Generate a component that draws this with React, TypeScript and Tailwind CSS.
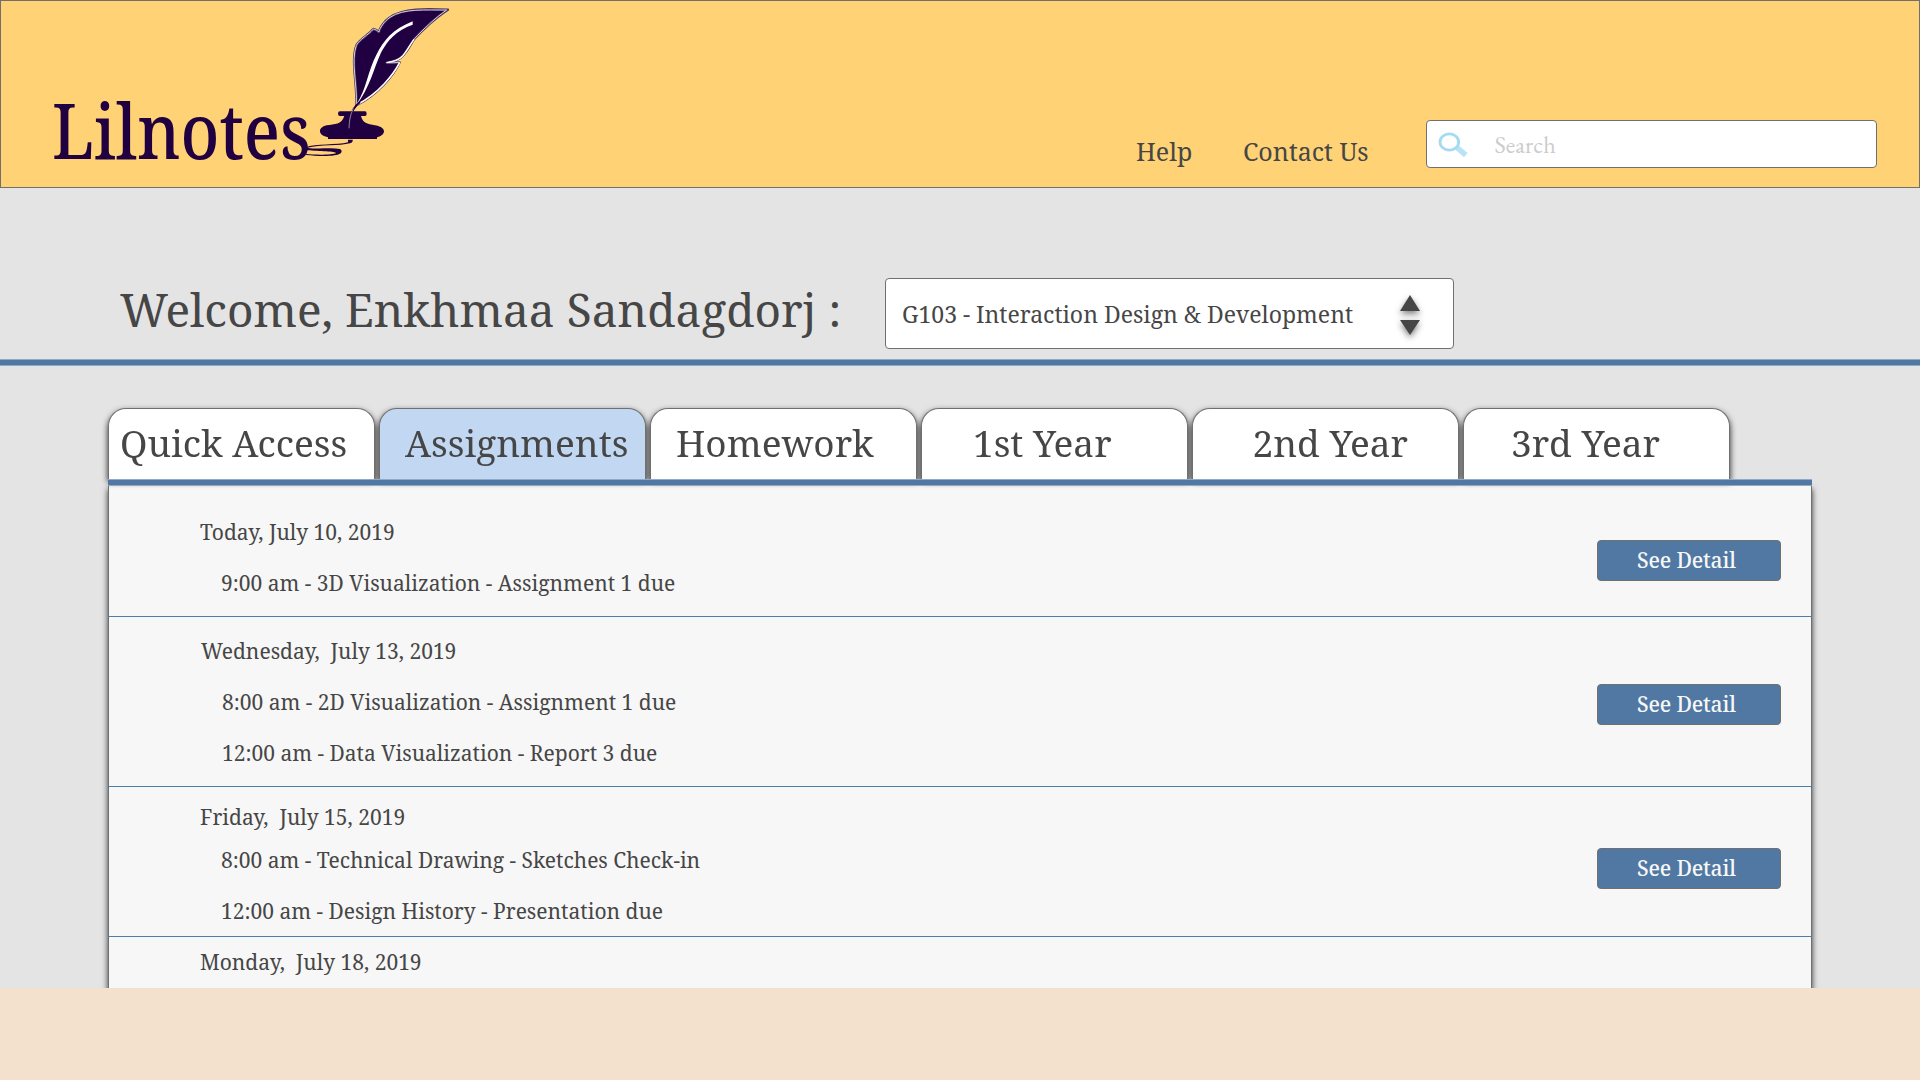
import { clsx } from 'clsx';

const serif = "font-['Noto_Serif','DejaVu_Serif',serif]";

function Quill() {
  return (
    <svg className="absolute left-[279px] -top-px h-[170px] w-[190px]" viewBox="0 0 570 510" fill="none">
      <path
        d="M229 316 C232 250 212 185 229 136 C238 118 265 105 280 87 C286 88 292 92 297 96 C298 86 312 64 330 52 C370 24 440 26 504 29 C470 50 425 92 402 118 C390 134 378 168 352 179 C342 184 330 186 320 188 C334 189 346 188 359 187 C342 224 296 282 229 316 Z"
        fill="#210041"
        stroke="#4d3763"
        strokeWidth="7"
        strokeLinejoin="round"
      />
      <path
        d="M229 316 C232 250 212 185 229 136 C238 118 265 105 280 87 C286 88 292 92 297 96 C298 86 312 64 330 52 C370 24 440 31 500 30 C470 50 425 92 402 118 C390 134 378 168 352 179 C342 184 330 186 320 188 C334 189 346 188 359 187 C342 224 296 282 229 316 Z"
        stroke="#d6cedd"
        strokeWidth="3"
      />
      <path d="M320 188 C342 185 356 180 368 168 C380 153 390 134 402 118" stroke="#fff" strokeWidth="4" />
      <path d="M359 188 C340 224 296 280 231 314" stroke="#fff" strokeWidth="4.5" />
      <path
        d="M229 314 C262 262 262 216 290 163 C310 122 338 88 398 64 L398 74 C350 90 322 122 304 156 C280 208 270 262 229 316 Z"
        fill="#fff"
      />
      <path
        d="M180 334 H255 Q260 334 260 341 Q260 348 255 348 H243 C248 374 272 373 293 377 C308 382 312 388 312 394 C312 404 300 410 291 412 V417 H144 V412 C130 409 120 403 120 394 C120 386 126 380 140 376 C164 372 185 374 193 348 H180 Q174 348 174 341 Q174 334 180 334 Z"
        fill="#210041"
      />
      <path d="M240 306 C222 320 214 336 210 356" stroke="#210041" strokeWidth="6" />
      <path d="M220 326 C210 345 208 362 207 385" stroke="#a79cb4" strokeWidth="2.5" />
      <path
        d="M204 419 H218 Q220 426 210 430 C180 438 120 434 82 443 C112 449 150 442 180 447 Q188 452 183 459 C168 472 110 468 78 465 V462 C110 465 156 465 169 459 C160 453 110 454 76 450 V442 C108 430 170 436 204 427 Z"
        fill="#210041"
      />
    </svg>
  );
}

function SearchIcon() {
  return (
    <svg className="mt-[10px] ml-[10px] h-[28px] w-[32px] shrink-0" viewBox="110 121 96 84" fill="none">
      <path d="M160 173 L174 164 L202 187 L191 200 Z" fill="#b8e3f6" />
      <ellipse cx="147" cy="154" rx="28" ry="24.5" stroke="#a3dbf2" strokeWidth="8.5" />
    </svg>
  );
}

function Header() {
  return (
    <header className="flex h-[188px] items-start border border-[#707070] bg-[#ffd275] text-[#464646]">
      <div className="relative w-[1135px] shrink-0">
        <div className="mt-[91px] ml-[51px] origin-left scale-x-[0.874] text-[76px] leading-none font-medium text-[#210041]">Lilnotes</div>
        <Quill />
      </div>
      <nav className="mt-[138px] flex text-[25px] leading-none">
        <a className="w-[107px]">Help</a>
        <a className="w-[182px] whitespace-nowrap">Contact Us</a>
      </nav>
      <div className="mt-[119px] ml-px flex h-[48px] w-[451px] rounded-[4px] border border-[#707070] bg-white">
        <SearchIcon />
        <span className="mt-[8px] ml-[25.5px] font-['EB_Garamond','Liberation_Serif',serif] text-[24.4px] leading-[30px] text-[#cccccc]">Search</span>
      </div>
    </header>
  );
}

const rule = 'h-[7px] border-y border-[#8faac7] bg-[#5078a3]';

function Welcome() {
  return (
    <section>
      <div className="flex h-[171px] items-start">
        <h1 className="mt-[98px] ml-[120px] w-[765px] shrink-0 text-[46px] leading-none whitespace-nowrap">Welcome, Enkhmaa Sandagdorj :</h1>
        <div className="mt-[90px] flex h-[71px] w-[569px] rounded-[4px] border border-[#707070] bg-white pl-4">
          <span className="w-[498px] text-[23px] leading-[70px]">G103 - Interaction Design &amp; Development</span>
          <svg className="mt-[15px] h-[45px] w-[22px] overflow-visible drop-shadow-[0_3px_3px_rgba(0,0,0,0.5)]" viewBox="0 0 22 45" fill="#464646">
            <path d="M10 1 L20 17 H0 Z" />
            <path d="M10 41 L20 26 H0 Z" />
          </svg>
        </div>
      </div>
      <div className={rule} />
    </section>
  );
}

const tabs = [
  { label: 'Quick Access', pad: 'pl-[11px]' },
  { label: 'Assignments', pad: 'pl-[25px]', active: true },
  { label: 'Homework', pad: 'pl-[25px]' },
  { label: '1st Year', pad: 'pl-[51px]' },
  { label: '2nd Year', pad: 'pl-[59.5px]' },
  { label: '3rd Year', pad: 'pl-[47px]' },
];

function Tabs() {
  return (
    <div className="flex h-[71px] gap-1 drop-shadow-[0_3px_3px_rgba(0,0,0,0.85)]">
      {tabs.map((t) => (
        <div
          key={t.label}
          className={clsx(
            'w-[267px] rounded-t-[18px] border border-b-0 border-[#707070] text-[37px] leading-[67px] whitespace-pre',
            t.pad,
            t.active ? 'bg-[#c2d7f2]' : 'bg-white',
          )}
        >
          {t.label}
        </div>
      ))}
    </div>
  );
}

const days = [
  {
    date: 'Today, July 10, 2019',
    items: ['9:00 am - 3D Visualization - Assignment 1 due'],
    row: 'h-[131px] border-b',
    text: 'pt-[21px] pl-[91px]',
    lead: 'leading-[51px]',
    button: 'mt-[54px]',
  },
  {
    date: 'Wednesday,  July 13, 2019',
    items: ['8:00 am - 2D Visualization - Assignment 1 due', '12:00 am - Data Visualization - Report 3 due'],
    row: 'h-[170px] border-b',
    text: 'pt-[9px] pl-[92px]',
    lead: 'leading-[51px]',
    button: 'mt-[67px]',
  },
  {
    date: 'Friday,  July 15, 2019',
    items: ['8:00 am - Technical Drawing - Sketches Check-in', '12:00 am - Design History - Presentation due'],
    row: 'h-[150px] border-b',
    text: 'pt-[13px] pl-[91px]',
    lead: 'leading-[35px]',
    button: 'mt-[61px]',
  },
  { date: 'Monday,  July 18, 2019', items: [], row: 'h-[80px]', text: 'pl-[91px]', lead: 'leading-[50px]', button: '' },
];

function Schedule() {
  return (
    <div className="w-[1704px] border-x border-[#707070] bg-[#f7f7f7] text-[21px] shadow-[0_3px_6px_rgba(0,0,0,0.8)]">
      {days.map((d) => (
        <div key={d.date} className={clsx('flex items-start justify-between border-[#4f7dab]', d.row)}>
          <div className={clsx('whitespace-pre', d.text)}>
            <div className={d.lead}>{d.date}</div>
            {d.items.map((item) => (
              <div key={item} className="pl-[21px] leading-[51px]">{item}</div>
            ))}
          </div>
          {d.button && (
            <button
              className={clsx(
                'mr-[30px] h-[41px] w-[184px] rounded-[4px] border border-[#707070] bg-[#5078a3] pb-px pl-[39px] text-left leading-[36px] font-medium tracking-[-0.15px] text-[#f7f7f7]',
                d.button,
              )}
            >
              See Detail
            </button>
          )}
        </div>
      ))}
    </div>
  );
}

export default function App() {
  return (
    <div className={clsx('h-[1080px] w-[1920px] overflow-hidden bg-[#f3e1ce] text-[#464646]', serif)}>
      <div className="h-[988px] overflow-hidden bg-[#e4e4e4]">
        <Header />
        <Welcome />
        <main className="mt-[42px] ml-[108px]">
          <Tabs />
          <div className={clsx('relative w-[1704px]', rule)} />
          <Schedule />
        </main>
      </div>
    </div>
  );
}
